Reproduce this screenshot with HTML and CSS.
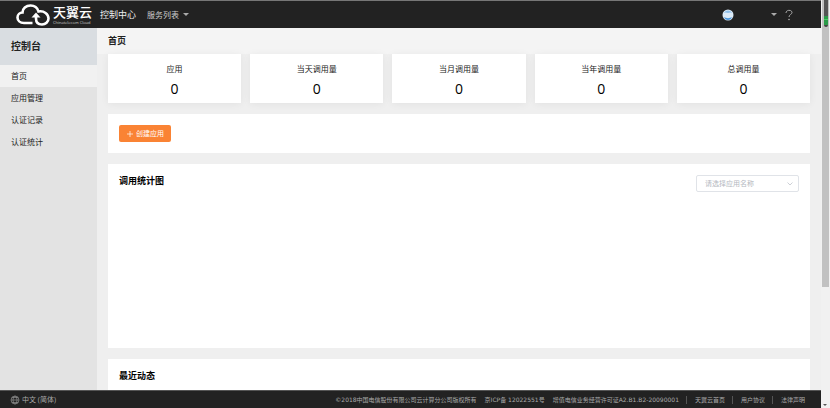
FILE: index.html
```html
<!DOCTYPE html>
<html lang="zh-CN">
<head>
    <meta charset="UTF-8">
    <meta name="viewport" content="width=device-width, initial-scale=1.0">
    <title>首页 - 控制台</title>
    <link rel="stylesheet" href="styles.css">
</head>
<body>
    <div class="app">
        <header class="top-bar">
            <a class="logo" href="#">
                <svg class="logo-cloud" viewBox="0 0 36 24" aria-hidden="true">
                    <path d="M17.500 20H9C5 20 2.500 17.500 2.500 14.500C2.500 11.500 5 9.500 7.500 9.500C7.500 5.500 11 2.500 15.500 2.500C19.500 2.500 22.500 5 23.500 8.500C29 7.500 33.500 11 33.500 15.500C33.500 19 30.500 21.500 27 21.500C23 21.500 21 19 21 15.500V13" fill="none" stroke="#fff" stroke-width="2.600"/>
                    <path d="M16.500 14.500L21 9.500L25.500 14.500Z" fill="#fff"/>
                </svg>
                <span class="logo-text">
                    <span class="logo-name">天翼云</span>
                    <span class="logo-sub">Chinatelecom Cloud</span>
                </span>
            </a>
            <a class="top-link" href="#">控制中心</a>
            <button class="top-menu" type="button">服务列表 <span class="caret"></span></button>
            <div class="user">
                <button class="user-menu" type="button" aria-label="用户">
                    <svg class="avatar" viewBox="0 0 12 12" aria-hidden="true">
                        <circle cx="6" cy="6" r="5.500" fill="#dcebf8"/>
                        <path d="M2 4C3 0.500 9 0.500 10 4L8.500 3.500L6 4L3.500 3.500Z" fill="#8fc0ea"/>
                        <path d="M2 8C4 9.500 8 9.500 10 8C9 12 3 12 2 8Z" fill="#4a96dc"/>
                    </svg>
                    <span class="caret"></span>
                </button>
                <a class="help" href="#" aria-label="帮助">
                    <svg viewBox="0 0 8 12" aria-hidden="true">
                        <path d="M1 4C1 0.500 7 0.500 7 3.500C7 5.500 4 5.500 4 8" fill="none" stroke="#aaa"/>
                        <circle cx="4" cy="10.500" r="0.800" fill="#aaa"/>
                    </svg>
                </a>
            </div>
        </header>

        <div class="body">
            <nav class="sidebar">
                <h2 class="sidebar-title">控制台</h2>
                <ul class="menu">
                    <li><a class="active" href="#">首页</a></li>
                    <li><a href="#">应用管理</a></li>
                    <li><a href="#">认证记录</a></li>
                    <li><a href="#">认证统计</a></li>
                </ul>
            </nav>

            <main class="content">
                <h1 class="page-title">首页</h1>
                <div class="panels">
                    <section class="stats">
                        <div class="stat"><span>应用</span><strong>0</strong></div>
                        <div class="stat"><span>当天调用量</span><strong>0</strong></div>
                        <div class="stat"><span>当月调用量</span><strong>0</strong></div>
                        <div class="stat"><span>当年调用量</span><strong>0</strong></div>
                        <div class="stat"><span>总调用量</span><strong>0</strong></div>
                    </section>

                    <section class="panel">
                        <button class="create" type="button">
                            <svg viewBox="0 0 6 6" aria-hidden="true"><path d="M3 0V6M0 3H6" stroke="#fff" stroke-width="0.700"/></svg>
                            创建应用
                        </button>
                    </section>

                    <section class="panel chart">
                        <h3>调用统计图</h3>
                        <div class="select-box">
                            <select aria-label="应用名称">
                                <option>请选择应用名称</option>
                            </select>
                            <svg viewBox="0 0 6 4" aria-hidden="true"><path d="M0.500 0.500L3 3L5.500 0.500" fill="none" stroke="#c0c4cc" stroke-width="0.800"/></svg>
                        </div>
                    </section>

                    <section class="panel recent">
                        <h3>最近动态</h3>
                    </section>
                </div>
            </main>
        </div>

        <footer class="bottom-bar">
            <button class="lang" type="button">
                <svg viewBox="0 0 10 10" aria-hidden="true">
                    <g fill="none" stroke="#8c8c8c" stroke-width="0.700">
                        <circle cx="5" cy="5" r="4"/>
                        <path d="M1 5H9M2 2.500H8M2 7.500H8"/>
                        <ellipse cx="5" cy="5" rx="2" ry="4"/>
                    </g>
                </svg>
                中文 (简体)
            </button>
            <div class="legal">
                <div class="copyright">
                    <span>©2018中国电信股份有限公司云计算分公司版权所有</span>
                    <span>京ICP备 12022551号</span>
                    <span>增值电信业务经营许可证A2.B1.B2-20090001</span>
                </div>
                <a href="#">天翼云首页</a>
                <a href="#">用户协议</a>
                <a href="#">法律声明</a>
            </div>
        </footer>
    </div>

    <!-- Scroll track -->
    <div class="track">
        <div class="thumb"></div>
        <span class="meter"></span>
        <span class="track-down"></span>
    </div>
</body>
</html>
```

FILE: styles.css
```css
/* General styles */
* {
    box-sizing: border-box;
}

body {
    display: flex;
    height: 100vh;
    margin: 0;
    overflow: hidden;
    background-color: #efefef;
    color: #222;
    font-family: "Open Sans", "Noto Sans CJK SC", sans-serif;
    font-size: 8px;
    line-height: 12px;
}

h1, h2, h3, ul {
    margin: 0;
    padding: 0;
}

a {
    color: inherit;
    text-decoration: none;
}

button, select {
    margin: 0;
    padding: 0;
    border: 0;
    background: none;
    color: inherit;
    font: inherit;
}

svg {
    display: block;
}

.app {
    display: flex;
    flex: 1;
    flex-direction: column;
    min-width: 0;
}

/* Top bar */
.top-bar {
    display: flex;
    align-items: center;
    height: 28px;
    padding: 0 28px 0 15px;
    border-top: 1px solid #777;
    background-color: #222;
    color: #eee;
}

.logo {
    display: flex;
    align-items: center;
    gap: 2px;
    margin-right: 8px;
}

.logo-cloud {
    width: 36px;
    height: 24px;
}

.logo-text {
    display: flex;
    flex-direction: column;
    color: #fff;
}

.logo-name {
    font-size: 13px;
    font-weight: 500;
    line-height: 16px;
}

.logo-sub {
    color: #ccc;
    font-size: 4px;
    line-height: 6px;
}

.top-link {
    margin-right: 11px;
    font-size: 9px;
}

.top-menu {
    display: flex;
    align-items: center;
    gap: 4px;
    color: #ccc;
}

.caret {
    border: 3px solid transparent;
    border-top-color: #aaa;
    border-bottom: 0;
}

.user,
.user-menu {
    display: flex;
    align-items: center;
}

.user {
    gap: 8px;
    margin-left: auto;
}

.user-menu {
    gap: 37px;
}

.avatar {
    width: 12px;
    height: 12px;
}

.help svg {
    width: 8px;
    height: 12px;
}

/* Middle area */
.body {
    display: flex;
    flex: 1;
    min-height: 0;
}

.sidebar {
    flex: none;
    width: 97px;
    background-color: #e3e3e3;
}

.sidebar-title {
    padding: 0 11px;
    background-color: #d9dde1;
    font-size: 10px;
    line-height: 37px;
}

.menu {
    list-style: none;
}

.menu a {
    display: block;
    padding: 0 11px;
    line-height: 22px;
}

.menu .active {
    background-color: #f1f1f1;
}

.content {
    flex: 1;
    min-width: 0;
    overflow: hidden;
}

.page-title {
    padding: 0 11px;
    background-color: #f4f4f4;
    font-size: 9px;
    line-height: 26px;
}

.panels {
    display: flex;
    flex-direction: column;
    gap: 11px;
    padding: 0 11px;
}

/* Stat cards */
.stats {
    display: grid;
    grid-template-columns: repeat(5, 1fr);
    gap: 9px;
}

.stat {
    display: flex;
    flex-direction: column;
    align-items: center;
    gap: 4px;
    height: 49px;
    padding-top: 9px;
    background-color: #fff;
    box-shadow: 0 1px 8px rgba(0, 0, 0, 0.06);
}

.stat strong {
    color: #000;
    font-size: 14px;
    font-weight: normal;
    line-height: 20px;
}

/* Panels */
.panel {
    padding: 11px;
    background-color: #fff;
}

.panel h3 {
    color: #000;
    font-size: 9px;
    line-height: 11px;
}

.create {
    display: flex;
    align-items: center;
    gap: 3px;
    height: 17px;
    padding: 0 7px 0 8px;
    border-radius: 2px;
    background-color: #fa8334;
    color: #fff;
    font-size: 7px;
}

.create svg {
    width: 6px;
    height: 6px;
}

.chart {
    display: flex;
    align-items: flex-start;
    justify-content: space-between;
    height: 184px;
}

.select-box {
    position: relative;
}

.select-box select {
    width: 103px;
    height: 17px;
    padding: 0 8px;
    border: 1px solid #e0e3e8;
    border-radius: 2px;
    background-color: #fff;
    color: #b4b8c0;
    font-size: 7px;
    appearance: none;
}

.select-box svg {
    position: absolute;
    top: 7px;
    right: 6px;
    width: 6px;
    height: 4px;
    pointer-events: none;
}

.recent {
    height: 100px;
}

/* Bottom bar */
.bottom-bar {
    display: flex;
    flex: none;
    align-items: center;
    justify-content: space-between;
    height: 18px;
    padding: 0 16px 0 10px;
    border-top: 1px solid #555;
    background-color: #222;
    color: #aaa;
    white-space: nowrap;
}

.lang {
    display: flex;
    align-items: center;
    gap: 2px;
    font-size: 7px;
}

.lang svg {
    width: 10px;
    height: 10px;
}

.legal {
    display: flex;
    align-items: center;
    font-size: 6px;
    line-height: 8px;
}

.copyright {
    display: flex;
    gap: 8px;
    font-family: "DejaVu Sans", "Noto Sans CJK SC", sans-serif;
}

.legal a {
    margin-left: 7px;
    padding-left: 8px;
    border-left: 1px solid #555;
}

/* Scroll track */
.track {
    position: relative;
    flex: none;
    width: 9px;
    background-color: #f1f1f1;
}

.thumb {
    height: 287px;
    margin: 0 1px;
    background-color: #c1c1c1;
}

.meter {
    position: absolute;
    top: 0;
    right: 2px;
    width: 4px;
    height: 27px;
    border-radius: 0 0 2px 2px;
    background: linear-gradient(#555 16px, #2a9a48 16px, #2a9a48 19px, #45d35f 19px, #45d35f 20px, #2a9a48 20px, #2a9a48 25px, #444 25px);
}

.track-down {
    position: absolute;
    right: 3px;
    bottom: 2px;
    border: 2px solid transparent;
    border-top-color: #555;
    border-bottom: 0;
}
```
